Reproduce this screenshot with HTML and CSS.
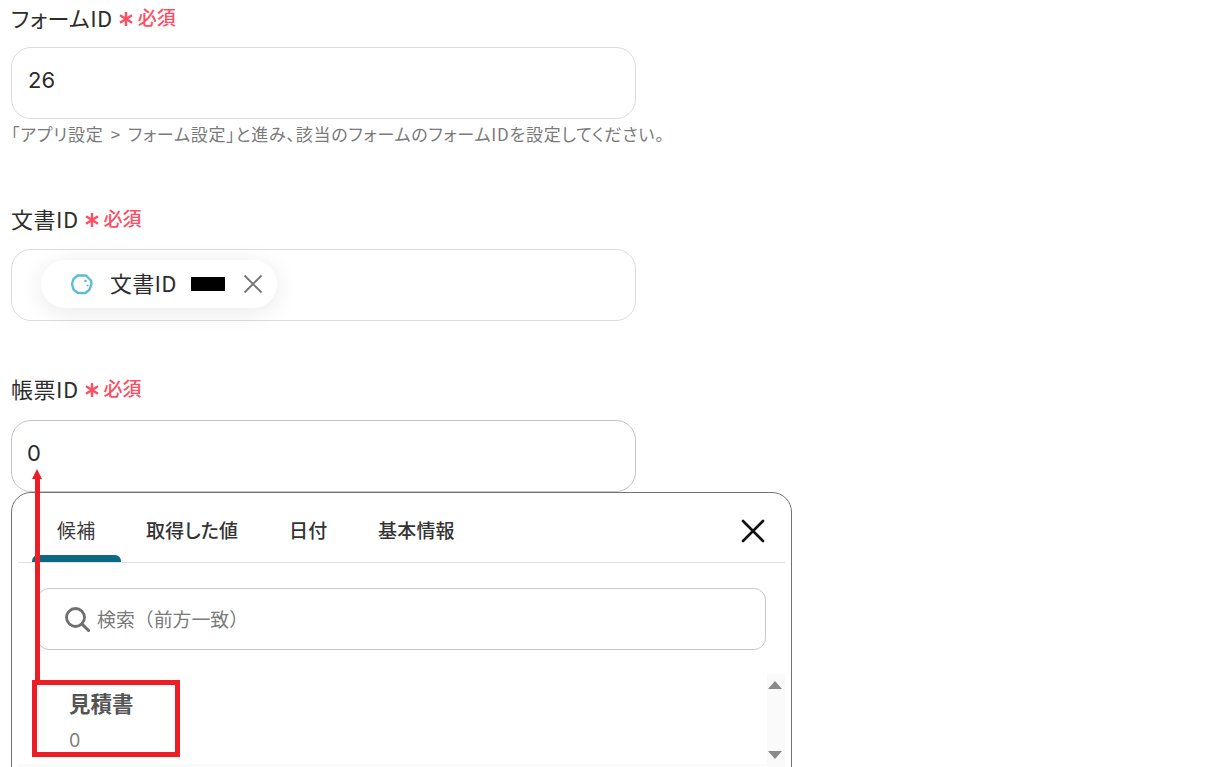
FILE: index.html
```html
<!DOCTYPE html>
<html lang="ja">
<head>
<meta charset="utf-8">
<title>フォーム設定</title>
<link rel="stylesheet" href="styles.css">
</head>
<body>
<main class="page">
  <section class="field field-form">
    <div class="label"><span>フォームID</span><svg class="star" width="14" height="14" viewBox="0 0 14 14" fill="none"><path d="M7 0v14M1 3.200l12 7.600M13 3.200L1 10.800" stroke="#ff4d63" stroke-width="2.400"/></svg><span class="req">必須</span></div>
    <div class="input"><span class="value">26</span></div>
    <p class="help">「アプリ設定 &gt; フォーム設定」と進み、該当のフォームのフォームIDを設定してください。</p>
  </section>
  <section class="field field-doc">
    <div class="label"><span>文書ID</span><svg class="star" width="14" height="14" viewBox="0 0 14 14" fill="none"><path d="M7 0v14M1 3.200l12 7.600M13 3.200L1 10.800" stroke="#ff4d63" stroke-width="2.400"/></svg><span class="req">必須</span></div>
    <div class="input input-chip">
      <div class="chip">
        <svg class="chip-icon" width="24" height="24" viewBox="0 0 24 24" fill="none"><path d="M7.500 3.500h8.500l5 5 .5 3.500-2 5.500-4 3.500H8l-4.500-3.500L2 12l1.500-5z" stroke="#5fbdd3" stroke-width="2.400" stroke-linejoin="round"/><circle cx="15.500" cy="9" r="1.300" fill="#5fbdd3"/><circle cx="17.500" cy="13.500" r="1.100" fill="#5fbdd3"/></svg>
        <span class="chip-text">文書ID</span>
        <span class="redact"></span>
        <svg class="chip-close" width="20" height="20" viewBox="0 0 20 20" fill="none"><path d="M1.500 1.500l17 17M18.500 1.500l-17 17" stroke="#737373" stroke-width="1.800"/></svg>
      </div>
    </div>
  </section>
  <section class="field field-slip">
    <div class="label"><span>帳票ID</span><svg class="star" width="14" height="14" viewBox="0 0 14 14" fill="none"><path d="M7 0v14M1 3.200l12 7.600M13 3.200L1 10.800" stroke="#ff4d63" stroke-width="2.400"/></svg><span class="req">必須</span></div>
    <div class="input input-active"><span class="value">0</span></div>
    <div class="popover">
      <div class="tabs">
        <span class="tab tab-on">候補</span>
        <span class="tab tab-2">取得した値</span>
        <span class="tab tab-3">日付</span>
        <span class="tab tab-4">基本情報</span>
        <svg class="close" width="24" height="24" viewBox="0 0 24 24" fill="none"><path d="M2 2l20 20M22 2L2 22" stroke="#111" stroke-width="2.600" stroke-linecap="round"/></svg>
      </div>
      <div class="search">
        <svg width="26" height="26" viewBox="0 0 26 26" fill="none"><circle cx="11.500" cy="11.500" r="9" stroke="#6e6e6e" stroke-width="2.800"/><path d="M18 18l6.500 6.500" stroke="#6e6e6e" stroke-width="3" stroke-linecap="round"/></svg>
        <span class="placeholder">検索（前方一致）</span>
      </div>
      <div class="list">
        <div class="item">
          <div class="item-title">見積書</div>
          <div class="item-value">0</div>
        </div>
        <div class="scrollbar"><span class="arrow-up"></span><span class="arrow-down"></span></div>
      </div>
    </div>
  </section>
</main>
<div class="mark-line"></div>
<div class="mark-head"></div>
<div class="mark-box"></div>
</body>
</html>
```
FILE: styles.css
```css
html, body { margin: 0; height: 767px; overflow: hidden; background: #fff; }
body {
  position: relative;
  font-family: "Noto Sans CJK JP", "Noto Sans", sans-serif;
  font-feature-settings: "palt";
  color: #2b2b2b;
}
.page { padding: 0 0 0 11px; }
.field { display: flex; flex-direction: column; align-items: flex-start; }
.field-doc { margin-top: 55px; }
.field-slip { margin-top: 50px; }
.label { display: flex; align-items: center; height: 34px; font-size: 22px; line-height: 34px; letter-spacing: 0.500px; margin-bottom: 13px; color: #2d2d2d; }
.field-doc .label { margin-bottom: 14px; }
.field-slip .label { margin-bottom: 15px; }
.star { flex: none; margin: 3px 5px 0 6px; }
.req { color: #ff4d63; font-size: 19px; font-weight: 500; letter-spacing: 0; }
.input {
  box-sizing: border-box; width: 625px; height: 72px;
  border: 1px solid #dcdce0; border-radius: 20px;
  display: flex; align-items: center; padding-left: 16px; background: #fff;
}
.input-active { border-color: #c4c4c4; }
.value { font-size: 22px; color: #2b2b2b; font-family: "Inter", "Noto Sans CJK JP", sans-serif; position: relative; top: -3px; }
.input-active .value { left: -1px; }
.help { margin: 2px 0 0; font-size: 17px; line-height: 25px; letter-spacing: 0.780px; word-spacing: 2.500px; color: #7a7a7a; white-space: nowrap; }
.input-chip { padding-left: 29px; }
.chip {
  display: flex; align-items: center; width: 236px; height: 48px; box-sizing: border-box;
  background: #fff; border-radius: 24px; box-shadow: 0 4px 24px rgba(0,0,0,.09); padding-left: 29px;
  position: relative; top: -1px;
}
.chip-icon { flex: none; width: 24px; height: 24px; }
.chip-text { font-size: 22px; letter-spacing: 0.300px; margin: 0 0 5px 16px; color: #2d2d2d; white-space: nowrap; }
.redact { width: 34px; height: 14px; background: #000; margin-left: 14px; flex: none; }
.chip-close { flex: none; margin-left: 18px; }
.popover {
  box-sizing: border-box; width: 781px; height: 300px; border: 1px solid #737373; border-radius: 20px;
  background: #fff; padding: 0 6px;
}
.tabs { position: relative; height: 69px; border-bottom: 1px solid #e2e2e2; }
.tab { position: absolute; top: 21px; font-size: 19px; line-height: 32px; letter-spacing: 0.200px; font-weight: 500; color: #333; white-space: nowrap; }
.tab-on { left: 39px; color: #3a3a3a; font-weight: 400; }
.tab-on::after { content: ""; position: absolute; left: -25px; width: 89px; height: 7px; top: 41px; background: #0a6a84; border-radius: 6px 6px 0 0; }
.tab-2 { left: 128px; }
.tab-3 { left: 271px; }
.tab-4 { left: 360px; }
.close { position: absolute; left: 723px; top: 26px; }
.search {
  box-sizing: border-box; margin: 25px 19px 0 19px; height: 62px; border: 1px solid #c8c8c8; border-radius: 12px;
  display: flex; align-items: center; padding-left: 26px;
}
.search svg { flex: none; }
.placeholder { font-size: 18.900px; font-feature-settings: normal; color: #7a7a7a; margin: 0 0 2px 7px; }
.list { position: relative; margin-top: 24px; height: 93px; background: linear-gradient(#fff 90px, #fafafa 90px); }
.item { padding: 14px 0 0 51px; }
.item-title { font-size: 21.500px; line-height: 30px; font-weight: 700; color: #555; }
.item-value { font-size: 18px; line-height: 24px; margin-top: 11px; color: #7c7c7c; font-family: "Inter", sans-serif; }
.scrollbar { position: absolute; right: 0; top: 0; width: 18px; height: 93px; background: #fafafa; }
.arrow-up, .arrow-down { position: absolute; left: 1px; width: 0; height: 0; border-left: 7px solid transparent; border-right: 7px solid transparent; }
.arrow-up { top: 7px; border-bottom: 8px solid #8a8a8a; }
.arrow-down { top: 77px; border-top: 8px solid #8a8a8a; }
.mark-line { position: absolute; left: 35px; top: 478px; width: 5px; height: 204px; background: #ee1c25; }
.mark-head { position: absolute; left: 32px; top: 469px; width: 0; height: 0; border-left: 5.500px solid transparent; border-right: 5.500px solid transparent; border-bottom: 10px solid #ee1c25; }
.mark-box { position: absolute; left: 32px; top: 680px; width: 148px; height: 77px; box-sizing: border-box; border: 5px solid #ee1c25; }
```
